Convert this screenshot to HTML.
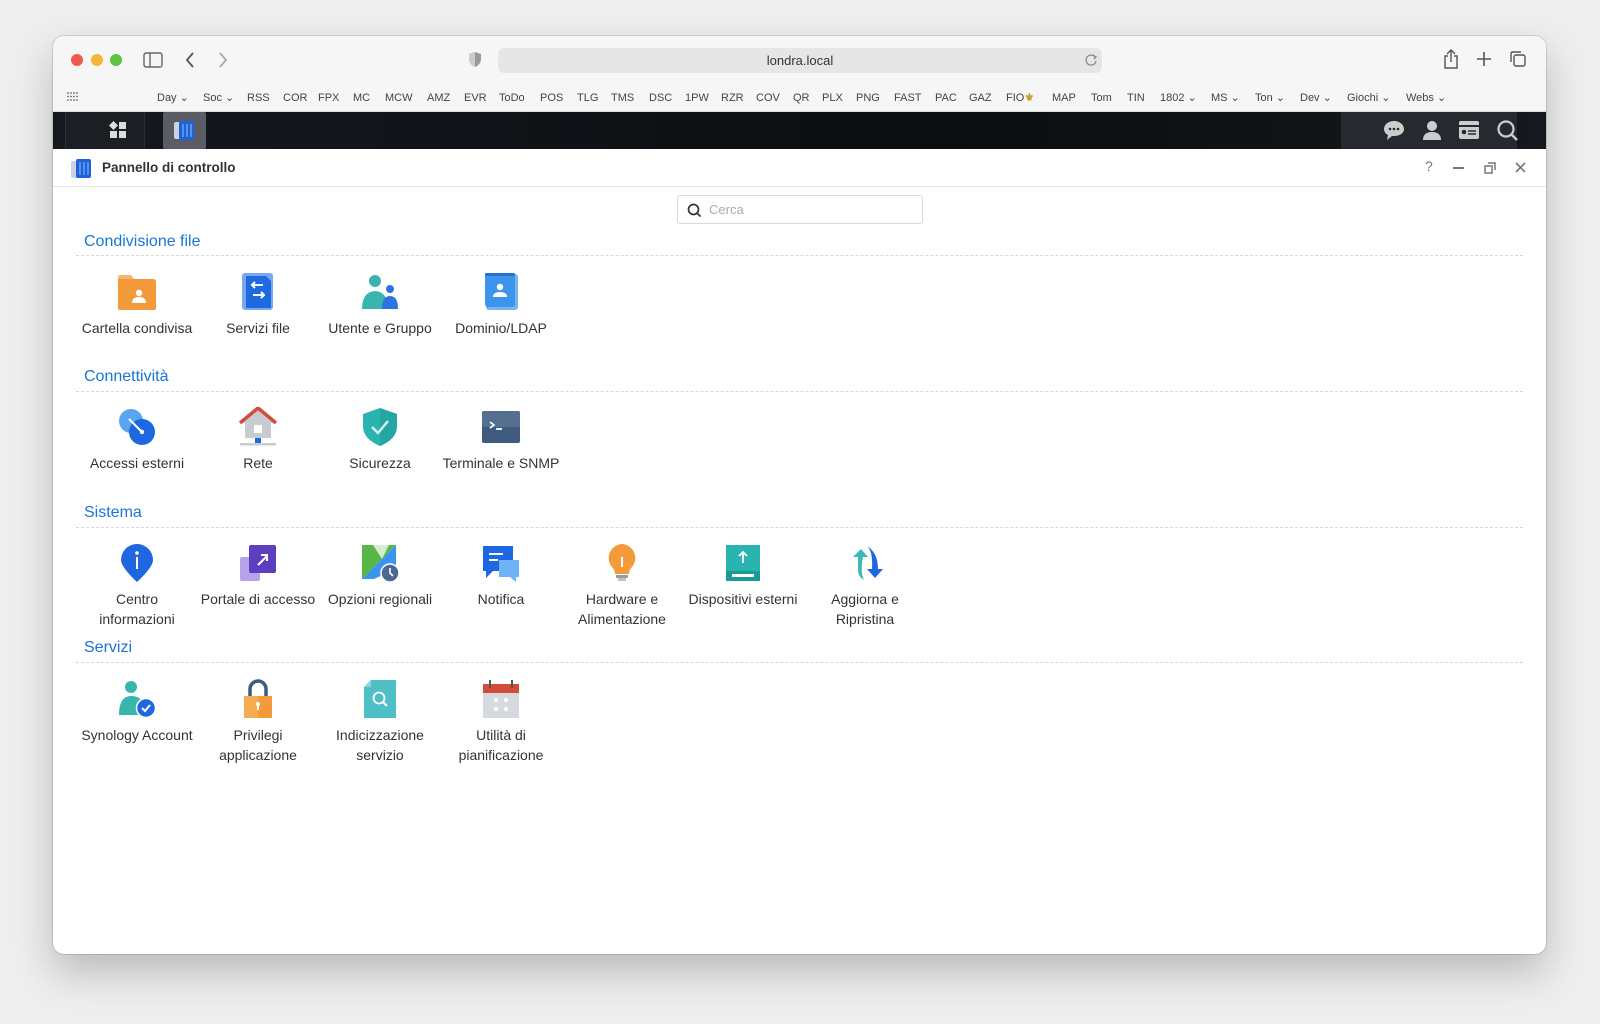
<!DOCTYPE html>
<html><head><meta charset="utf-8">
<style>
*{margin:0;padding:0;box-sizing:border-box}
body{width:1600px;height:1024px;background:#eeeeef;font-family:"Liberation Sans",sans-serif;position:relative;overflow:hidden}
.win{position:absolute;left:53px;top:36px;width:1493px;height:918px;background:#fff;border-radius:11px;overflow:hidden;box-shadow:0 18px 40px rgba(0,0,0,.22),0 0 0 1px rgba(0,0,0,.12)}
.tb{position:absolute;left:0;top:0;width:100%;height:76px;background:#f6f6f6;border-bottom:1px solid #dcdcdc}
.dot{position:absolute;top:18px;width:12px;height:12px;border-radius:50%}
.addr{position:absolute;left:445px;top:12px;width:604px;height:25px;background:#e6e6e7;border-radius:6px;font-size:13px;color:#333;text-align:center;line-height:25px}
.bm{position:absolute;top:52px;height:20px;font-size:11px;color:#444;line-height:20px;white-space:nowrap}
.bm span{position:absolute}
.task{position:absolute;left:0;top:76px;width:100%;height:37px;background:linear-gradient(90deg,#15191e,#0b0d10 60%,#15181c)}
.ttl{position:absolute;left:0;top:113px;width:100%;height:38px;border-bottom:1px solid #e6e6e6;background:#fff}
.sec{position:absolute;left:31px;font-size:16px;color:#1a73d6}
.line{position:absolute;left:23px;width:1447px;border-top:1px dashed #d8d8d8}
.it{position:absolute;width:122px;padding:0 2.5px;text-align:center;font-size:14px;color:#333;line-height:19.5px}
.it svg{display:block;margin:0 auto 7px}
</style></head><body>
<div class="win">
 <div class="tb">
  <div class="dot" style="left:18px;background:#ee5a52"></div>
  <div class="dot" style="left:38px;background:#f5b43a"></div>
  <div class="dot" style="left:57px;background:#5ec443"></div>
  <svg style="position:absolute;left:90px;top:16px" width="20" height="16"><rect x="1" y="1" width="18" height="14" rx="2" fill="none" stroke="#666" stroke-width="1.4"/><line x1="7" y1="1" x2="7" y2="15" stroke="#666" stroke-width="1.4"/></svg>
  <svg style="position:absolute;left:131px;top:15px" width="12" height="18"><path d="M9 2L3 9L9 16" fill="none" stroke="#555" stroke-width="1.8"/></svg>
  <svg style="position:absolute;left:164px;top:15px" width="12" height="18"><path d="M3 2L9 9L3 16" fill="none" stroke="#aaa" stroke-width="1.8"/></svg>
  <svg style="position:absolute;left:415px;top:15px" width="14" height="17"><path d="M7 1L13 3V8C13 12 10 15 7 16C4 15 1 12 1 8V3Z" fill="#999"/><path d="M7 1V16C4 15 1 12 1 8V3Z" fill="#ccc"/></svg>
  <div class="addr">londra.local</div>
  <svg style="position:absolute;left:1031px;top:17px" width="14" height="14"><path d="M11 4A5 5 0 1 0 12 8" fill="none" stroke="#888" stroke-width="1.3"/><path d="M9 2L12 4L10 6" fill="none" stroke="#888" stroke-width="1.3"/></svg>
  <svg style="position:absolute;left:1390px;top:13px" width="16" height="20"><path d="M5 7H2V19H14V7H11" fill="none" stroke="#555" stroke-width="1.4"/><path d="M8 1V13M4 5L8 1L12 5" fill="none" stroke="#555" stroke-width="1.4"/></svg>
  <svg style="position:absolute;left:1424px;top:16px" width="14" height="14"><path d="M7 0V14M0 7H14" stroke="#555" stroke-width="1.6"/></svg>
  <svg style="position:absolute;left:1456px;top:14px" width="18" height="18"><rect x="5" y="5" width="11" height="11" rx="2" fill="none" stroke="#555" stroke-width="1.4"/><path d="M2 12V4Q2 2 4 2H12" fill="none" stroke="#555" stroke-width="1.4"/></svg>
  <svg style="position:absolute;left:14px;top:56px" width="12" height="10" fill="#666"><circle cx="1" cy="1" r=".9"/><circle cx="4" cy="1" r=".9"/><circle cx="7" cy="1" r=".9"/><circle cx="10" cy="1" r=".9"/><circle cx="1" cy="4.5" r=".9"/><circle cx="4" cy="4.5" r=".9"/><circle cx="7" cy="4.5" r=".9"/><circle cx="10" cy="4.5" r=".9"/><circle cx="1" cy="8" r=".9"/><circle cx="4" cy="8" r=".9"/><circle cx="7" cy="8" r=".9"/><circle cx="10" cy="8" r=".9"/></svg>
  <div class="bm" style="left:-53px">
   <span style="left:157px">Day ⌄</span><span style="left:203px">Soc ⌄</span><span style="left:247px">RSS</span><span style="left:283px">COR</span><span style="left:318px">FPX</span><span style="left:353px">MC</span><span style="left:385px">MCW</span><span style="left:427px">AMZ</span><span style="left:464px">EVR</span><span style="left:499px">ToDo</span><span style="left:540px">POS</span><span style="left:577px">TLG</span><span style="left:611px">TMS</span><span style="left:649px">DSC</span><span style="left:685px">1PW</span><span style="left:721px">RZR</span><span style="left:756px">COV</span><span style="left:793px">QR</span><span style="left:822px">PLX</span><span style="left:856px">PNG</span><span style="left:894px">FAST</span><span style="left:935px">PAC</span><span style="left:969px">GAZ</span><span style="left:1006px">FIO<b style="color:#c8a030">⚜</b></span><span style="left:1052px">MAP</span><span style="left:1091px">Tom</span><span style="left:1127px">TIN</span><span style="left:1160px">1802 ⌄</span><span style="left:1211px">MS ⌄</span><span style="left:1255px">Ton ⌄</span><span style="left:1300px">Dev ⌄</span><span style="left:1347px">Giochi ⌄</span><span style="left:1406px">Webs ⌄</span>
  </div>
 </div>
 <div class="task">
  <div style="position:absolute;left:12px;top:0;width:80px;height:37px;background:#1b1f24;border-left:1px solid #2c3036;border-right:1px solid #2c3036"></div>
  <svg style="position:absolute;left:56px;top:9px" width="18" height="18" fill="#ddd"><path d="M4.5 0L9 4.5L4.5 9L0 4.5Z"/><rect x="10" y="1" width="7" height="7"/><rect x="1" y="10" width="7" height="7"/><rect x="10" y="10" width="7" height="7"/></svg>
  <div style="position:absolute;left:110px;top:0;width:43px;height:37px;background:#5a5e64;border-radius:2px"></div>
  <svg style="position:absolute;left:120px;top:7px" width="22" height="22"><rect x="1" y="3" width="8" height="17" rx="2" fill="#c8d4e6"/><rect x="6" y="2" width="15" height="19" rx="2" fill="#1f62d8"/><path d="M10 5V18M14 5V18M18 5V18" stroke="#7fb0ff" stroke-width="1.2"/></svg>
  <div style="position:absolute;left:1288px;top:0;width:176px;height:37px;background:#262a30"></div>
  <svg style="position:absolute;left:1330px;top:8px" width="22" height="21"><path d="M11 1C5 1 1 5 1 9C1 12 3 14 5 15L4 20L9 16C10 16 10 16 11 16C17 16 21 13 21 9C21 5 17 1 11 1Z" fill="#ccc"/><circle cx="7" cy="9" r="1.3" fill="#262a30"/><circle cx="11" cy="9" r="1.3" fill="#262a30"/><circle cx="15" cy="9" r="1.3" fill="#262a30"/></svg>
  <svg style="position:absolute;left:1369px;top:8px" width="20" height="20" fill="#ccc"><circle cx="10" cy="6" r="5"/><path d="M1 20C1 14 5 12 10 12C15 12 19 14 19 20Z"/></svg>
  <svg style="position:absolute;left:1405px;top:8px" width="22" height="20"><rect x="1" y="1" width="20" height="18" rx="2" fill="#ccc"/><rect x="1" y="5" width="20" height="2" fill="#262a30"/><circle cx="6" cy="12" r="2.3" fill="#262a30"/><path d="M10 11H18M10 14H18" stroke="#262a30" stroke-width="1.5"/></svg>
  <svg style="position:absolute;left:1444px;top:8px" width="21" height="21"><circle cx="9" cy="9" r="7.5" fill="none" stroke="#ccc" stroke-width="2.2"/><path d="M14.5 14.5L20 20" stroke="#ccc" stroke-width="2.4"/></svg>
 </div>
 <div class="ttl">
  <svg style="position:absolute;left:17px;top:8px" width="22" height="22"><rect x="1" y="4" width="8" height="17" rx="2" fill="#c8d4e6"/><rect x="6" y="2" width="15" height="19" rx="2" fill="#1f62d8"/><path d="M10 5V18M14 5V18M18 5V18" stroke="#7fb0ff" stroke-width="1.2"/></svg>
  <div style="position:absolute;left:49px;top:11px;font-size:13.5px;font-weight:bold;color:#333">Pannello di controllo</div>
  <div style="position:absolute;left:1372px;top:9px;font-size:14px;color:#777">?</div>
  <div style="position:absolute;left:1400px;top:18px;width:11px;height:1.5px;background:#777"></div>
  <svg style="position:absolute;left:1431px;top:13px" width="12" height="12"><rect x="1" y="4" width="7" height="7" fill="none" stroke="#777" stroke-width="1.5"/><path d="M4 1H11V8" fill="none" stroke="#777" stroke-width="1.5"/></svg>
  <svg style="position:absolute;left:1462px;top:13px" width="11" height="11"><path d="M1 1L10 10M10 1L1 10" stroke="#777" stroke-width="1.6"/></svg>
 </div>
 <div style="position:absolute;left:624px;top:159px;width:246px;height:29px;border:1px solid #d6d9de;border-radius:3px">
  <svg style="position:absolute;left:9px;top:7px" width="15" height="15"><circle cx="6.5" cy="6.5" r="5" fill="none" stroke="#333" stroke-width="1.7"/><path d="M10 10L13.5 13.5" stroke="#333" stroke-width="1.8"/></svg>
  <div style="position:absolute;left:31px;top:6px;font-size:13px;color:#aaa">Cerca</div>
 </div>

 <div class="sec" style="top:197px">Condivisione file</div><div class="line" style="top:219px"></div>
 <div class="sec" style="top:332px">Connettività</div><div class="line" style="top:355px"></div>
 <div class="sec" style="top:468px">Sistema</div><div class="line" style="top:491px"></div>
 <div class="sec" style="top:603px">Servizi</div><div class="line" style="top:626px"></div>

 <div class="it" style="left:23px;top:236px"><svg width="40" height="40"><path d="M1 6Q1 3 4 3H14L17 7H36Q39 7 39 10V36Q39 38 37 38H3Q1 38 1 36Z" fill="#f39a3a"/><path d="M1 6Q1 3 4 3H14L17 7H1Z" fill="#f7b66e"/><circle cx="22" cy="21" r="3.2" fill="#fff"/><path d="M15 31Q15 25 22 25Q29 25 29 31Z" fill="#fff"/></svg>Cartella condivisa</div>
 <div class="it" style="left:144px;top:236px"><svg width="40" height="40"><rect x="4" y="1" width="31" height="37" rx="3" fill="#7aa8ee"/><path d="M8 4H28L33 9V36H8Z" fill="#1e6ae0"/><path d="M25 13H14M17 10L14 13L17 16M15 23H26M23 20L26 23L23 26" fill="none" stroke="#fff" stroke-width="2"/></svg>Servizi file</div>
 <div class="it" style="left:266px;top:236px"><svg width="40" height="40"><circle cx="15" cy="9" r="6" fill="#3bb3b3"/><path d="M2 37Q2 20 15 19Q28 20 28 37Z" fill="#38b5ad"/><circle cx="30" cy="17" r="4" fill="#2d73e5"/><path d="M22 37Q22 24 30 24Q38 24 38 37Z" fill="#2d73e5"/></svg>Utente e Gruppo</div>
 <div class="it" style="left:387px;top:236px"><svg width="40" height="40"><rect x="5" y="2" width="32" height="36" rx="3" fill="#7bb3f2"/><rect x="4" y="1" width="30" height="34" rx="3" fill="#3d94ee"/><rect x="4" y="1" width="30" height="3" rx="1" fill="#2b6fd0"/><circle cx="19" cy="15" r="3.2" fill="#fff"/><path d="M12 25Q12 20 19 20Q26 20 26 25Z" fill="#fff"/></svg>Dominio/LDAP</div>

 <div class="it" style="left:23px;top:371px"><svg width="40" height="40"><circle cx="14" cy="14" r="12" fill="#5aa5f2"/><circle cx="25" cy="25" r="13" fill="#1f67e0"/><path d="M12 12L25 25" stroke="#fff" stroke-width="2"/><circle cx="25" cy="25" r="2.2" fill="#fff"/></svg>Accessi esterni</div>
 <div class="it" style="left:144px;top:371px"><svg width="40" height="40"><path d="M20 2L36 16H33V31H7V16H4Z" fill="#c8ccd2"/><path d="M2 16L20 1L38 16" fill="none" stroke="#d24c3a" stroke-width="3.5"/><rect x="16" y="18" width="8" height="8" fill="#fff"/><rect x="17" y="31" width="6" height="5" fill="#1e6ae0"/><rect x="2" y="36" width="36" height="2.5" fill="#c8ccd2"/></svg>Rete</div>
 <div class="it" style="left:266px;top:371px"><svg width="40" height="40"><path d="M20 1L37 7V19Q37 32 20 39Q3 32 3 19V7Z" fill="#2ab4b0"/><path d="M20 1L37 7V19Q37 32 20 39Z" fill="#23a7a3"/><path d="M12 20L18 26L28 14" fill="none" stroke="#d6f3f2" stroke-width="2.4"/></svg>Sicurezza</div>
 <div class="it" style="left:387px;top:371px"><svg width="40" height="40"><rect x="1" y="4" width="38" height="32" rx="2" fill="#3f5a7d"/><rect x="1" y="4" width="38" height="16" rx="2" fill="#556f90"/><path d="M9 15L13 18L9 21M15 22H21" fill="none" stroke="#fff" stroke-width="1.7"/></svg>Terminale e SNMP</div>

 <div class="it" style="left:23px;top:507px"><svg width="40" height="40"><path d="M20 39Q4 24 4 17A16 16 0 0 1 36 17Q36 24 20 39Z" fill="#1f67e0"/><circle cx="20" cy="10" r="1.8" fill="#fff"/><rect x="19" y="14" width="2" height="12" fill="#fff"/></svg>Centro informazioni</div>
 <div class="it" style="left:144px;top:507px"><svg width="40" height="40"><rect x="2" y="14" width="20" height="24" rx="2" fill="#b8a2ea"/><rect x="11" y="2" width="27" height="28" rx="2" fill="#5b3fc0"/><path d="M20 22L29 13M23 12H29V18" fill="none" stroke="#fff" stroke-width="2"/></svg>Portale di accesso</div>
 <div class="it" style="left:266px;top:507px"><svg width="40" height="40"><path d="M2 2H36L2 36Z" fill="#58b847"/><path d="M36 2V26L14 36H2Z" fill="#3b93ef"/><path d="M13 2L22 16L29 2Z" fill="#d6ecd0"/><circle cx="30" cy="30" r="9" fill="#4b6990" stroke="#fff" stroke-width="1.5"/><path d="M30 25V30L33 33" fill="none" stroke="#fff" stroke-width="1.6"/></svg>Opzioni regionali</div>
 <div class="it" style="left:387px;top:507px"><svg width="40" height="40"><path d="M2 3H32V28H12L5 35V28H2Z" fill="#1f67e0"/><path d="M18 17H38V34H35V39L29 34H18Z" fill="#6fb2f5"/><path d="M8 11H22M8 17H17" stroke="#fff" stroke-width="2"/></svg>Notifica</div>
 <div class="it" style="left:508px;top:507px"><svg width="40" height="40"><path d="M20 1A14 14 0 0 1 30 24Q27 27 27 31H13Q13 27 10 24A14 14 0 0 1 20 1Z" fill="#f39a3a"/><rect x="14" y="32" width="12" height="3" fill="#9a9fa6"/><rect x="16" y="35" width="8" height="3" fill="#bfc3c8"/><path d="M20 14V24" stroke="#fff" stroke-width="2"/></svg>Hardware e Alimentazione</div>
 <div class="it" style="left:629px;top:507px"><svg width="40" height="40"><rect x="3" y="2" width="34" height="36" fill="#2ab4b0"/><rect x="3" y="28" width="34" height="10" fill="#1b9a96"/><rect x="9" y="31" width="22" height="3" fill="#fff"/><path d="M20 20V9M16 13L20 9L24 13" fill="none" stroke="#fff" stroke-width="1.8"/></svg>Dispositivi esterni</div>
 <div class="it" style="left:751px;top:507px"><svg width="40" height="40"><path d="M16 6L8 14H13V26Q13 34 19 37Q15 30 18 14H23Z" fill="#3bb9b9"/><path d="M22 3Q28 8 27 26H22L30 35L38 26H33Q33 10 22 3Z" fill="#1f67e0"/></svg>Aggiorna e Ripristina</div>

 <div class="it" style="left:23px;top:643px"><svg width="40" height="40"><circle cx="14" cy="8" r="6" fill="#38b5ad"/><path d="M2 36Q2 17 14 17Q24 17 26 25V36Z" fill="#38b5ad"/><circle cx="29" cy="29" r="9.5" fill="#1f67e0" stroke="#fff" stroke-width="1.5"/><path d="M25 29L28 32L33 26" fill="none" stroke="#fff" stroke-width="2"/></svg>Synology Account</div>
 <div class="it" style="left:144px;top:643px"><svg width="40" height="40"><path d="M12 18V10A8 8 0 0 1 28 10V18" fill="none" stroke="#3d5a80" stroke-width="3.5"/><rect x="6" y="17" width="28" height="22" rx="1" fill="#f39a3a"/><rect x="6" y="17" width="14" height="22" fill="#f5ad52"/><circle cx="20" cy="25" r="2" fill="#fff"/><rect x="19" y="25" width="2" height="6" fill="#fff"/></svg>Privilegi applicazione</div>
 <div class="it" style="left:266px;top:643px"><svg width="40" height="40"><path d="M4 8L11 1H36V39H4Z" fill="#4fbfc6"/><path d="M4 8L11 1V8Z" fill="#8ad6db"/><circle cx="19" cy="19" r="5.5" fill="none" stroke="#fff" stroke-width="1.8"/><path d="M23 23L27 27" stroke="#fff" stroke-width="2"/></svg>Indicizzazione servizio</div>
 <div class="it" style="left:387px;top:643px"><svg width="40" height="40"><rect x="2" y="5" width="36" height="34" fill="#d6d9dd"/><rect x="2" y="5" width="36" height="9" fill="#d24c3a"/><path d="M9 1V9M31 1V9" stroke="#555" stroke-width="2"/><circle cx="15" cy="21" r="2" fill="#fff"/><circle cx="25" cy="21" r="2" fill="#fff"/><circle cx="15" cy="30" r="2" fill="#fff"/><circle cx="25" cy="30" r="2" fill="#fff"/></svg>Utilità di pianificazione</div>
</div>
</body></html>
